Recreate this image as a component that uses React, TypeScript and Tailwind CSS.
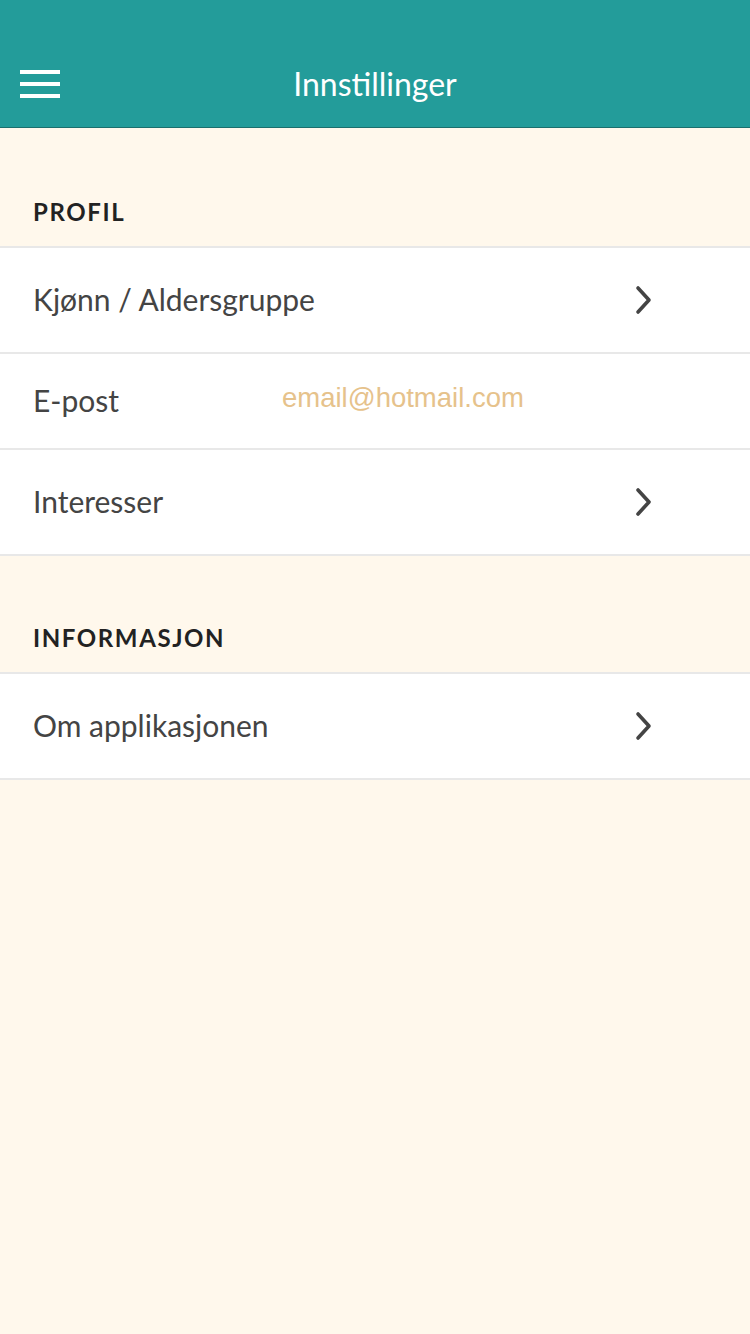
import React from "react"

const font = { fontFamily: "Lato, 'Open Sans', sans-serif" }

function Chevron() {
  return (
    <svg width="20" height="30" viewBox="0 0 20 30" className="shrink-0">
      <path
        d="M4 3 L15 15 L4 27"
        fill="none"
        stroke="#444444"
        strokeWidth="3.6"
        strokeLinecap="round"
        strokeLinejoin="round"
      />
    </svg>
  )
}

function SectionHeader({ label, h }: { label: string; h: string }) {
  return (
    <div className={`${h} flex items-end px-[33px] pb-[22px] border-b-2 border-[#e8e8e8]`}>
      <span className="text-[24px] font-bold tracking-[1.6px] text-[#222222] leading-none">
        {label}
      </span>
    </div>
  )
}

function Row({
  label,
  h,
  chevron,
  value,
}: {
  label: string
  h: string
  chevron?: boolean
  value?: string
}) {
  return (
    <div className={`${h} bg-white flex items-center border-b-2 border-[#e8e8e8] pl-[33px] pr-[96px]`}>
      <span
        className={`text-[30px] text-[#444444] whitespace-nowrap shrink-0 -mt-[2px] ${value ? "w-[249px]" : ""}`}
      >
        {label}
      </span>
      {value && (
        <span
          className="text-[27.5px] text-[#e6c28b] -mt-[6px]"
          style={{ fontFamily: "'Liberation Sans', Arial, sans-serif" }}
        >
          {value}
        </span>
      )}
      <div className="flex-1" />
      {chevron && <Chevron />}
    </div>
  )
}

export default function App() {
  return (
    <div className="min-h-[1334px] bg-[#fff8ec]" style={font}>
      <div className="h-[128px] bg-[#239c9a] border-b border-[#1b6f6d] relative flex items-center justify-center pt-[40px]">
        <div className="absolute left-[20px] top-[70px] flex flex-col gap-[8px]">
          <div className="w-[40px] h-[4px] bg-white" />
          <div className="w-[40px] h-[4px] bg-white" />
          <div className="w-[40px] h-[4px] bg-white" />
        </div>
        <span className="text-[32px] text-white">Innstillinger</span>
      </div>
      <SectionHeader label="PROFIL" h="h-[120px]" />
      <Row label="Kjønn / Aldersgruppe" h="h-[106px]" chevron />
      <Row label="E-post" h="h-[96px]" value="email@hotmail.com" />
      <Row label="Interesser" h="h-[106px]" chevron />
      <SectionHeader label="INFORMASJON" h="h-[118px]" />
      <Row label="Om applikasjonen" h="h-[106px]" chevron />
    </div>
  )
}
